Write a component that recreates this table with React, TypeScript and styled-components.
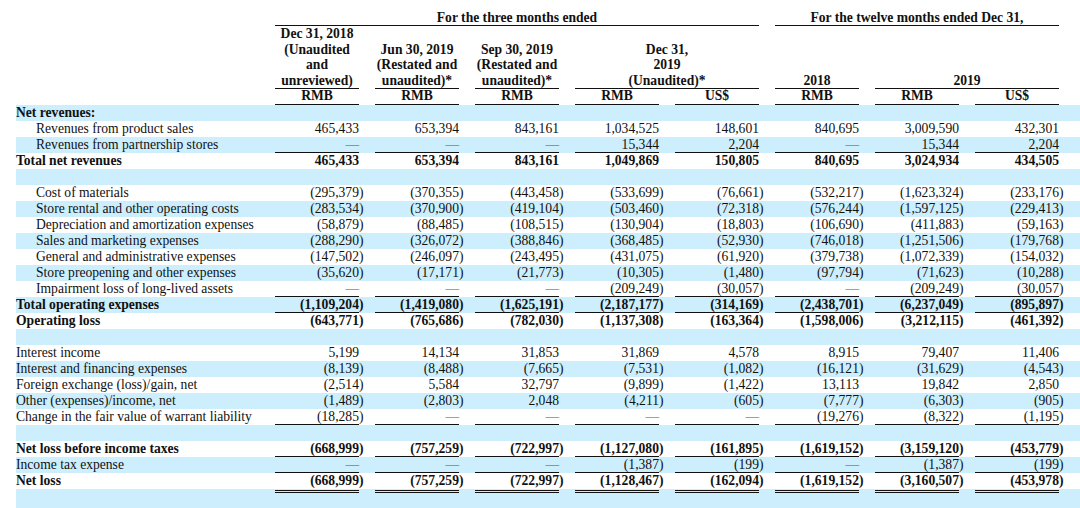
import React from "react";
import styled, { createGlobalStyle, css } from "styled-components";

const Global = createGlobalStyle`
  html, body { margin: 0; padding: 0; background: #ffffff; }
  body {
    width: 1080px;
    height: 508px;
    overflow: hidden;
    font-family: "Liberation Serif", "Times New Roman", serif;
    color: #111111;
    font-size: 13.6px;
  }
`;

const STRIPE = "#cceefd";
const INK = "#111111";

const gridCols = css`
  display: grid;
  grid-template-columns: 243px repeat(8, 84px);
  column-gap: 16px;
  padding-right: 11px;
`;

const Page = styled.div`
  padding-left: 16px;
  width: 1080px;
  box-sizing: border-box;
`;

const Header = styled.div`
  ${gridCols};
  font-weight: 700;
  text-align: center;
  white-space: nowrap;
`;

const GroupTitle = styled.div<{ $col: string }>`
  grid-row: 1;
  grid-column: ${(p) => p.$col};
  padding-top: 10px;
  line-height: 15px;
  border-bottom: 1px solid ${INK};
`;

const ColTitle = styled.div<{ $col: string }>`
  grid-row: 2;
  grid-column: ${(p) => p.$col};
  display: flex;
  flex-direction: column;
  justify-content: flex-end;
  line-height: 15.6px;
  border-bottom: 1px solid ${INK};
`;

const Currency = styled.div<{ $col: number }>`
  grid-row: 3;
  grid-column: ${(p) => p.$col};
  line-height: 14.6px;
  border-bottom: 1px solid ${INK};
`;

const Row = styled.div<{ $shade: boolean; $bold?: boolean; $tall?: boolean }>`
  ${gridCols};
  height: ${(p) => (p.$tall ? "19px" : "16px")};
  line-height: 16px;
  background: ${(p) => (p.$shade ? STRIPE : "transparent")};
  font-weight: ${(p) => (p.$bold ? 700 : 400)};
  white-space: nowrap;
`;

const Label = styled.div<{ $indent?: boolean }>`
  padding-left: ${(p) => (p.$indent ? "20px" : "0")};
`;

const Num = styled.div<{ $line?: "single" | "double" }>`
  position: relative;
  height: 16px;
  box-sizing: border-box;
  text-align: right;
  border-bottom: ${(p) => (p.$line === "single" ? `1px solid ${INK}` : "none")};
  ${(p) =>
    p.$line === "double" &&
    css`
      &::after {
        content: "";
        position: absolute;
        left: 0;
        right: 0;
        bottom: -4px;
        height: 1px;
        border-top: 1px solid ${INK};
        border-bottom: 1px solid ${INK};
      }
    `}
`;

const Close = styled.span`
  margin-right: -4.5px;
`;

const Dash = styled.span`
  color: #555;
`;

type RowDef = {
  label?: string;
  indent?: boolean;
  bold?: boolean;
  values?: string[];
  line?: "single" | "double";
};

const D = "—";

const rows: RowDef[] = [
  { label: "Net revenues:", bold: true },
  {
    label: "Revenues from product sales",
    indent: true,
    values: ["465,433", "653,394", "843,161", "1,034,525", "148,601", "840,695", "3,009,590", "432,301"],
  },
  {
    label: "Revenues from partnership stores",
    indent: true,
    values: [D, D, D, "15,344", "2,204", D, "15,344", "2,204"],
    line: "single",
  },
  {
    label: "Total net revenues",
    bold: true,
    values: ["465,433", "653,394", "843,161", "1,049,869", "150,805", "840,695", "3,024,934", "434,505"],
  },
  {},
  {
    label: "Cost of materials",
    indent: true,
    values: ["(295,379)", "(370,355)", "(443,458)", "(533,699)", "(76,661)", "(532,217)", "(1,623,324)", "(233,176)"],
  },
  {
    label: "Store rental and other operating costs",
    indent: true,
    values: ["(283,534)", "(370,900)", "(419,104)", "(503,460)", "(72,318)", "(576,244)", "(1,597,125)", "(229,413)"],
  },
  {
    label: "Depreciation and amortization expenses",
    indent: true,
    values: ["(58,879)", "(88,485)", "(108,515)", "(130,904)", "(18,803)", "(106,690)", "(411,883)", "(59,163)"],
  },
  {
    label: "Sales and marketing expenses",
    indent: true,
    values: ["(288,290)", "(326,072)", "(388,846)", "(368,485)", "(52,930)", "(746,018)", "(1,251,506)", "(179,768)"],
  },
  {
    label: "General and administrative expenses",
    indent: true,
    values: ["(147,502)", "(246,097)", "(243,495)", "(431,075)", "(61,920)", "(379,738)", "(1,072,339)", "(154,032)"],
  },
  {
    label: "Store preopening and other expenses",
    indent: true,
    values: ["(35,620)", "(17,171)", "(21,773)", "(10,305)", "(1,480)", "(97,794)", "(71,623)", "(10,288)"],
  },
  {
    label: "Impairment loss of long-lived assets",
    indent: true,
    values: [D, D, D, "(209,249)", "(30,057)", D, "(209,249)", "(30,057)"],
    line: "single",
  },
  {
    label: "Total operating expenses",
    bold: true,
    values: ["(1,109,204)", "(1,419,080)", "(1,625,191)", "(2,187,177)", "(314,169)", "(2,438,701)", "(6,237,049)", "(895,897)"],
    line: "single",
  },
  {
    label: "Operating loss",
    bold: true,
    values: ["(643,771)", "(765,686)", "(782,030)", "(1,137,308)", "(163,364)", "(1,598,006)", "(3,212,115)", "(461,392)"],
  },
  {},
  {
    label: "Interest income",
    values: ["5,199", "14,134", "31,853", "31,869", "4,578", "8,915", "79,407", "11,406"],
  },
  {
    label: "Interest and financing expenses",
    values: ["(8,139)", "(8,488)", "(7,665)", "(7,531)", "(1,082)", "(16,121)", "(31,629)", "(4,543)"],
  },
  {
    label: "Foreign exchange (loss)/gain, net",
    values: ["(2,514)", "5,584", "32,797", "(9,899)", "(1,422)", "13,113", "19,842", "2,850"],
  },
  {
    label: "Other (expenses)/income, net",
    values: ["(1,489)", "(2,803)", "2,048", "(4,211)", "(605)", "(7,777)", "(6,303)", "(905)"],
  },
  {
    label: "Change in the fair value of warrant liability",
    values: ["(18,285)", D, D, D, D, "(19,276)", "(8,322)", "(1,195)"],
    line: "single",
  },
  {},
  {
    label: "Net loss before income taxes",
    bold: true,
    values: ["(668,999)", "(757,259)", "(722,997)", "(1,127,080)", "(161,895)", "(1,619,152)", "(3,159,120)", "(453,779)"],
    line: "single",
  },
  {
    label: "Income tax expense",
    values: [D, D, D, "(1,387)", "(199)", D, "(1,387)", "(199)"],
    line: "single",
  },
  {
    label: "Net loss",
    bold: true,
    values: ["(668,999)", "(757,259)", "(722,997)", "(1,128,467)", "(162,094)", "(1,619,152)", "(3,160,507)", "(453,978)"],
    line: "double",
  },
];

const Value: React.FC<{ v: string }> = ({ v }) => {
  if (v === D) return <Dash>{D}</Dash>;
  if (v.startsWith("(")) {
    return (
      <>
        {v.slice(0, -1)}
        <Close>)</Close>
      </>
    );
  }
  return <>{v}</>;
};

const currencies = ["RMB", "RMB", "RMB", "RMB", "US$", "RMB", "RMB", "US$"];

export default function App() {
  return (
    <>
      <Global />
      <Page>
        <Header>
          <GroupTitle $col="2 / span 5">For the three months ended</GroupTitle>
          <GroupTitle $col="7 / span 3">For the twelve months ended Dec 31,</GroupTitle>

          <ColTitle $col="2">
            <span>Dec 31, 2018</span>
            <span>(Unaudited</span>
            <span>and</span>
            <span>unreviewed)</span>
          </ColTitle>
          <ColTitle $col="3">
            <span>Jun 30, 2019</span>
            <span>(Restated and</span>
            <span>unaudited)*</span>
          </ColTitle>
          <ColTitle $col="4">
            <span>Sep 30, 2019</span>
            <span>(Restated and</span>
            <span>unaudited)*</span>
          </ColTitle>
          <ColTitle $col="5 / span 2">
            <span>Dec 31,</span>
            <span>2019</span>
            <span>(Unaudited)*</span>
          </ColTitle>
          <ColTitle $col="7">
            <span>2018</span>
          </ColTitle>
          <ColTitle $col="8 / span 2">
            <span>2019</span>
          </ColTitle>

          {currencies.map((c, i) => (
            <Currency key={i} $col={i + 2}>
              {c}
            </Currency>
          ))}
        </Header>

        {rows.map((r, i) => (
          <Row key={i} $shade={i % 2 === 0} $bold={r.bold}>
            <Label $indent={r.indent}>{r.label ?? ""}</Label>
            {r.values
              ? r.values.map((v, j) => (
                  <Num key={j} $line={r.line}>
                    <Value v={v} />
                  </Num>
                ))
              : null}
          </Row>
        ))}
        <Row $shade $tall>
          <Label />
        </Row>
      </Page>
    </>
  );
}
